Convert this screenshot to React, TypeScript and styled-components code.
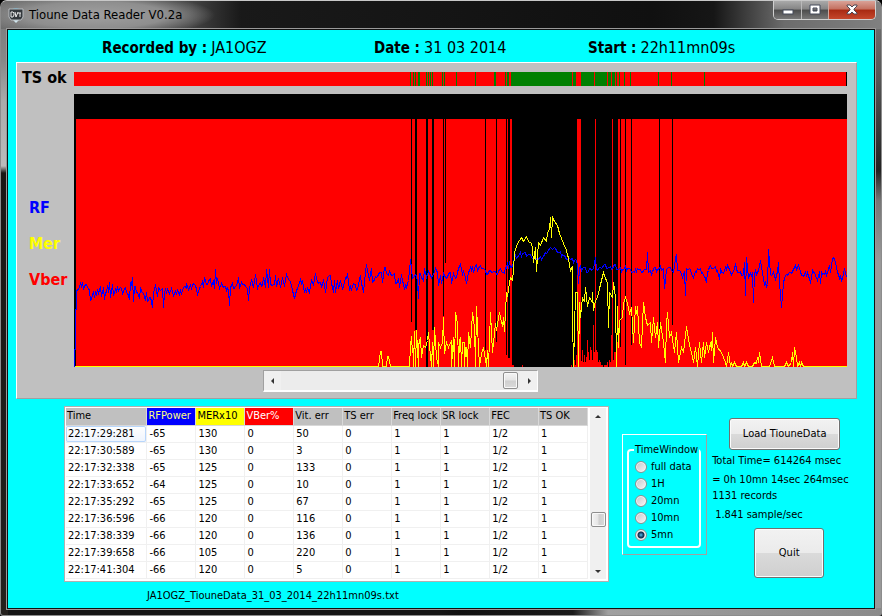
import React, { useState } from "react";
import styled, { createGlobalStyle, css } from "styled-components";

const GlobalStyle = createGlobalStyle`
  *, *::before, *::after { box-sizing: border-box; }
  body {
    margin: 0;
    background: #000;
    color: #000;
    font-family: "DejaVu Sans Condensed", "Noto Sans", sans-serif;
    font-size: 11px;
    line-height: 16px;
  }
  button, input { font: inherit; color: inherit; margin: 0; }
`;

type Point = [number, number];
type Span = [start: number, width: number];
type Bar = [x: number, width: number, top: number, bottom: number];

const LEFT = 74;
const TOP = 94;
const WIDTH = 773;
const HEIGHT = 273;
const BASE = TOP + HEIGHT;

const parse = (s: string): Point[] =>
  s.trim().split(/\s+/).map((p) => p.split(",").map(Number) as Point);

const RF = parse(`
74,366 74,349 75,349 75,309 76,309 76,290 79,287 82,282 83,289 86,284 89,290 90,300 93,291 94,297 97,289 98,293 100,286
101,296 103,287 104,299 107,285 108,292 109,282 110,297 112,284 113,295 117,287 118,290 121,288 122,293 125,287 128,295
129,299 130,282 131,285 132,277 133,301 134,286 137,292 139,298 140,287 143,293 145,300 146,292 147,301 150,297 151,301
152,307 153,293 155,284 157,296 158,287 160,290 162,288 163,307 164,292 167,289 169,293 171,288 173,295 177,290 179,294
183,287 186,288 186,283 188,289 192,285 193,283 196,289 197,294 200,286 202,281 203,287 204,277 206,284 210,278 211,286
213,280 214,288 215,269 216,283 217,278 219,288 221,283 223,287 227,288 228,290 229,305 230,287 232,283 233,288 235,287
237,282 238,277 239,288 241,282 245,286 247,288 248,300 249,288 251,279 253,287 255,274 257,288 259,283 262,285 263,277
265,287 266,269 268,287 269,269 270,283 274,284 275,275 276,286 278,278 280,287 282,277 284,286 286,274 288,279 290,281
292,290 294,298 296,290 299,282 302,280 304,292 307,288 309,292 311,280 313,284 315,273 318,283 322,284 323,279 325,292
327,277 330,275 333,292 334,280 335,292 337,280 338,288 340,280 342,289 344,282 347,273 349,290 353,283 357,289 360,275
363,292 366,264 369,280 371,268 372,282 376,277 379,272 381,272 382,282 384,267 388,275 389,271 391,275 394,273 395,283
398,278 399,287 401,274 404,289 408,280 410,259 412,278 416,275 417,282 418,298 419,273 422,278 423,280 424,268 426,277
428,271 430,275 433,274 435,268 437,272 438,285 440,275 441,283 443,273 445,277 450,272 451,283 453,273 455,278 458,268
460,264 462,274 463,271 466,283 468,272 472,266 473,272 476,264 477,270 480,265 483,268 486,274 490,270 493,271 496,274
500,268 504,273 507,262 508,268 509,261 510,267 513,262 514,257 518,255 522,253 528,254 531,257 534,257 537,259 542,257
546,253 548,250 551,248 555,248 557,252 562,254 565,257 570,259 572,258 573,262 576,260 577,265 578,283 579,268 584,267
587,272 590,268 593,268 595,257 596,269 600,267 603,265 608,267 611,269 614,264 617,269 622,269 627,268 630,269 634,272
637,268 641,272 644,269 646,269 647,252 648,272 652,272 653,268 657,269 659,268 663,268 664,288 666,269 668,267 671,270
673,272 676,254 677,270 680,271 682,277 684,271 685,295 686,268 690,269 693,277 697,268 702,272 706,282 707,272 710,265
713,268 714,267 717,270 719,279 720,268 723,273 727,265 730,272 733,271 735,264 737,272 743,274 744,262 745,295 746,257
748,277 752,272 753,302 754,273 758,270 760,260 762,272 764,284 767,284 768,249 770,274 773,272 775,279 777,271 778,262
779,282 781,307 783,282 786,274 790,272 793,269 798,265 800,271 803,276 807,272 810,283 812,270 815,275 817,280 819,271
820,283 821,272 824,274 827,272 829,265 830,272 832,258 833,257 836,267 839,278 842,278 844,268 846,277`);

const MER = parse(`
74,366 378,366 380,351 381,351 382,366 386,366 387,356 388,356 390,366 409,366 410,345 411,336 412,352 413,353 413,366
414,331 415,366 416,330 418,366 418,345 420,337 421,357 423,345 425,347 427,340 428,332 429,345 431,366 432,342 433,366
434,327 436,357 438,366 438,342 440,347 442,342 443,317 444,353 446,342 448,347 451,340 451,366 453,337 454,366 455,312
457,323 458,366 459,340 460,337 461,366 462,342 464,342 464,366 465,347 466,347 467,366 468,332 470,347 472,312 474,327
475,366 476,306 478,347 479,366 481,353 483,347 486,366 487,350 488,366 490,312 492,352 493,342 495,323 496,330 499,312
502,326 503,317 504,331 506,292 507,296 508,289 510,277 512,280 513,270 514,252 517,243 521,237 523,241 526,236 528,241
531,243 532,248 533,262 535,247 536,271 538,242 540,245 543,237 546,241 547,233 549,228 550,217 551,237 552,217 554,221
557,225 559,233 563,243 566,250 568,258 570,270 572,266 572,317 573,366 575,292 577,292 578,366 579,302 580,317 582,297
583,300 584,301 585,287 587,306 589,297 592,302 592,292 593,310 595,300 597,297 599,288 603,272 607,283 608,327 609,292
612,297 613,282 615,297 616,366 617,306 618,347 619,320 622,317 623,303 625,297 627,303 629,313 631,307 633,342 635,306
636,313 637,306 639,342 641,347 642,323 643,302 645,317 647,325 650,322 651,342 653,317 655,337 657,322 658,347 660,322
663,342 665,362 666,323 667,312 669,337 671,332 674,352 676,332 678,362 681,347 683,352 686,326 689,345 691,352 693,362
695,347 697,366 699,342 701,362 703,342 704,357 706,342 708,352 710,342 711,350 712,332 713,362 715,337 717,347 721,352
725,362 726,366 728,352 730,366 731,362 732,366 734,362 736,366 741,366 743,362 744,366 746,362 748,366 752,366 754,362
756,363 757,357 758,362 759,352 761,366 769,366 772,357 774,366 784,366 786,362 788,366 791,362 792,352 793,366 794,347
796,357 797,366 799,362 800,366 801,362 803,366 846,366`);

/* Stretches with no errors, painted black over the red area. */
const GAPS: Bar[] = [
  [411, 1, 119, 322], [415, 2, 119, 330], [426, 2, 119, 367], [432, 2, 119, 330],
  [443, 1, 119, 316], [445, 1, 119, 263], [485, 1, 119, 350], [496, 1, 119, 342],
  [506, 1, 119, 355], [508, 2, 119, 358], [512, 65, 119, 367],
  [581, 14, 119, 367], [596, 16, 119, 367], [613, 5, 119, 367], [620, 1, 119, 347],
  [625, 1, 119, 365], [631, 1, 119, 345], [659, 1, 119, 340], [672, 1, 119, 325],
];

/* Low error readings inside the clean stretches: x, top. */
const LOW_ERRORS = parse(`
512,365 513,365 522,365 571,365 574,360 575,365 576,355 581,361 582,350 583,362 584,355 585,362 586,357 587,340 588,352
589,360 590,347 591,350 592,360 593,325 594,352 596,350 597,352 598,362 599,360 600,362 601,365 602,365 604,365 605,365
606,365 607,362 609,360 610,362 611,335 613,360 614,352 615,352 616,345 617,342`);

const LOCKED: Span[] = [
  [410, 1], [413, 1], [415, 1], [418, 2], [426, 1], [428, 1], [430, 1], [432, 1], [442, 1], [444, 1],
  [456, 1], [475, 1], [494, 2], [505, 1], [507, 2], [511, 61], [573, 3], [581, 13], [595, 12],
  [608, 3], [612, 3], [616, 1], [619, 1], [624, 1], [630, 1], [658, 1], [671, 1], [704, 1],
];

/* Fills the samples between recorded turning points with a small repeatable flutter. */
const flutter = (points: Point[]): Point[] => {
  const out: Point[] = [];
  points.forEach(([x, y], i) => {
    out.push([x, y]);
    const next = points[i + 1];
    if (!next || next[0] - x < 3 || next[0] <= 77) return;
    for (let k = x + 1; k < next[0]; k += 1) {
      const t = (k - x) / (next[0] - x);
      const offset = ((k * 7919) % 5) - 2;
      out.push([k, Math.round(y + (next[1] - y) * t) + offset]);
    }
  });
  return out;
};

const toPath = (points: Point[]) => points.map((p) => p.join(",")).join(" ");

const RF_PATH = toPath(flutter(RF));
const MER_PATH = toPath(MER);

const Frame = styled.main`
  display: flex;
  flex-direction: column;
  min-height: 100vh;
  padding: 0 6px 6px 6px;
  border: 1px solid #8c8c8c;
  border-top-color: #c8c8c8;
  border-radius: 7px 7px 3px 3px;
  background:
    linear-gradient(90deg, transparent 50%, #101010 52%, #1a1a1a 65%, #a0a0a0 69%, #8a8a8a 100%) bottom / 100% 7px no-repeat,
    linear-gradient(180deg, #777 0, #888 60px, #aaa 100px, #bbb 165px, #1a1614 172px, #24201d 100%) left / 7px 100% no-repeat,
    linear-gradient(180deg, #777 0, #555 80px, #222 170px, #777 200px, #999 260px, #999 100%) right / 7px 100% no-repeat,
    #151515;
`;

const TitleBar = styled.header`
  display: flex;
  align-items: flex-start;
  height: 28px;
  margin: 0 -6px;
  padding-left: 7px;
  border-radius: 6px 6px 0 0;
  background:
    radial-gradient(ellipse 120px 22px at 94px 14px, #a0a0a0 0, #8e8e8e 60%, transparent 100%),
    linear-gradient(90deg, #6c6c6c 0, #444 190px, #191919 240px, #101010 650px, #161616 81%, #6c6c6c 89%, #808080 100%);
`;

const Title = styled.h1`
  flex: 1;
  margin: 0;
  padding: 6px 0 0 5px;
  font-size: 13px;
  font-weight: 400;
  line-height: 16px;
`;

const AppIcon = styled.svg`
  width: 16px;
  height: 16px;
  margin-top: 6px;
`;

const WindowButtons = styled.div`
  display: flex;
  height: 19px;
  margin-right: 5px;
  border: 1px solid #d0d0d0;
  border-top: 0;
  border-radius: 0 0 5px 5px;
  overflow: hidden;
`;

const WindowButton = styled.button<{ $close?: boolean }>`
  display: flex;
  align-items: center;
  justify-content: center;
  width: ${(p) => (p.$close ? 47 : 27)}px;
  padding: 0;
  border: 0;
  border-left: 1px solid ${(p) => (p.$close ? "#cfa9a0" : "#b9b9b9")};
  background: ${(p) =>
    p.$close
      ? "linear-gradient(180deg, #d9a297 0, #c4705f 45%, #a82a12 50%, #c5482c 100%)"
      : "linear-gradient(180deg, #a9a9a9 0, #858585 45%, #4c4c4c 50%, #777 100%)"};
  &:first-child { border-left: 0; }
`;

const Client = styled.section`
  flex: 1;
  padding: 0 17px 4px 8px;
  border: 1px solid #111;
  outline: 1px solid #999;
  outline-offset: 0;
  background: #0ff;
`;

const Heading = styled.dl`
  display: grid;
  grid-template-columns: 272fr 214fr 269fr;
  height: 32px;
  margin: 0;
  padding: 8px 0 0 86px;
  font-size: 15px;
  line-height: 20px;
`;

const HeadingItem = styled.div`
  display: flex;
  gap: 4px;
  white-space: nowrap;
  dt { font-weight: 700; }
  dd { margin: 0; font-size: 16px; }
`;

const bevel = css`
  border: 1px solid #a0a0a0;
  border-top-color: #fff;
  border-left-color: #fff;
`;

const ChartPanel = styled.section`
  ${bevel}
  display: grid;
  grid-template-columns: 57px 1fr;
  padding: 9px 9px 6px 0;
  row-gap: 8px;
  background: #c0c0c0;
`;

const StripLabel = styled.h2`
  margin: 0;
  padding-left: 5px;
  font-size: 16px;
  line-height: 12px;
  white-space: nowrap;
`;

const Strip = styled.svg`
  display: block;
  width: 100%;
  height: 14px;
`;

const Plot = styled.svg`
  display: block;
  width: 100%;
  height: 273px;
`;

const Legend = styled.ul`
  margin: 0;
  padding: 96px 0 0 12px;
  list-style: none;
  font-size: 16px;
  font-weight: 700;
`;

const LegendItem = styled.li<{ $color: string }>`
  line-height: 36px;
  color: ${(p) => p.$color};
`;

const HScroll = styled.div`
  grid-column: 1 / -1;
  display: flex;
  width: 275px;
  height: 22px;
  margin: -5px 0 0 246px;
  border: 1px solid #a0a0a0;
  border-right-color: #fff;
  border-bottom-color: #fff;
  border-width: 1px 1px 2px 1px;
  background: #ececec;
`;

const ScrollButton = styled.button`
  display: flex;
  align-items: center;
  justify-content: center;
  flex: 0 0 17px;
  padding: 0;
  border: 0;
  background: #f0f0f0;
`;

const Track = styled.input<{ $vertical?: boolean }>`
  appearance: none;
  flex: 1;
  min-width: 0;
  min-height: 0;
  background: transparent;
  ${(p) => p.$vertical && "writing-mode: vertical-lr; width: 16px;"}
  &::-webkit-slider-thumb {
    appearance: none;
    width: 15px;
    height: ${(p) => (p.$vertical ? 15 : 17)}px;
    border: 1px solid #8e8e8e;
    border-radius: 2px;
    box-shadow: inset 0 0 0 1px #f8f8f8;
    background: linear-gradient(${(p) => (p.$vertical ? "90deg" : "180deg")}, #f4f4f4 0, #e4e4e4 48%, #cfcfcf 52%, #dadada 100%);
  }
`;

const Lower = styled.div`
  display: flex;
  align-items: flex-start;
  padding: 7px 0 0 48px;
`;

const RecordColumn = styled.div`
  flex: 0 1 545px;
`;

const GridBox = styled.div`
  display: flex;
  justify-content: space-between;
  padding: 1px 2px 2px 1px;
  border: 1px solid #b0b0b0;
  background: #fff;
`;

const Records = styled.table`
  flex: 0 1 522px;
  height: 171px;
  border-collapse: collapse;
  table-layout: fixed;
  line-height: 16px;
  white-space: nowrap;
`;

const HeadCell = styled.th<{ $bg?: string; $fg?: string; $wide?: boolean }>`
  width: ${(p) => (p.$wide ? 81 : 49)}px;
  height: 17px;
  padding: 0 0 0 1px;
  border-right: 1px solid #d8d8d8;
  border-bottom: 1px solid #d8d8d8;
  background: ${(p) => p.$bg ?? "#c0c0c0"};
  color: ${(p) => p.$fg ?? "#000"};
  font-weight: 400;
  text-align: left;
`;

const Cell = styled.td<{ $focused?: boolean }>`
  height: 17px;
  padding: 0 0 0 2px;
  border-right: 1px solid #f0f0f0;
  border-bottom: 1px solid #f0f0f0;
  ${(p) =>
    p.$focused &&
    "border-radius: 2px; background: linear-gradient(#fff, #eef4fd); box-shadow: inset 0 0 0 1px #b8d6fb;"}
`;

const VScroll = styled.div`
  display: flex;
  flex-direction: column;
  width: 16px;
  background: #f0f0f0;
`;

const FileName = styled.p`
  margin: 6px 0 0 83px;
`;

const WindowPanel = styled.div`
  ${bevel}
  flex: 0 0 84px;
  height: 121px;
  margin: 28px 0 0 13px;
  padding: 7px 5px 0 4px;
`;

const Choices = styled.fieldset`
  min-width: 0;
  height: 106px;
  margin: 0;
  padding: 0 0 0 6px;
  border: 2px solid #fff;
  border-radius: 4px;
  legend { padding: 0 1px; margin-left: -1px; white-space: nowrap; }
`;

const Choice = styled.label`
  display: flex;
  align-items: center;
  gap: 4px;
  height: 17px;
  white-space: nowrap;
`;

const Radio = styled.input`
  appearance: none;
  width: 12px;
  height: 12px;
  border: 1px solid #8e8f8f;
  border-radius: 50%;
  box-shadow: inset 0 0 0 1px #f4f4f4;
  background: linear-gradient(135deg, #c4c7cb, #f6f6f6);
  &:checked {
    background: radial-gradient(circle at 5px 5px, #5cc0ea 0, #1a4d78 2px, #102c48 3px, #dfe6ea 4px);
  }
`;

const Side = styled.div`
  display: flex;
  flex-direction: column;
  align-items: flex-start;
  margin: 12px 0 0 5px;
  white-space: nowrap;
`;

const PushButton = styled.button<{ $tall?: boolean }>`
  width: ${(p) => (p.$tall ? 70 : 111)}px;
  height: ${(p) => (p.$tall ? 50 : 32)}px;
  margin-left: ${(p) => (p.$tall ? 42 : 17)}px;
  padding: 0;
  border: 1px solid #707070;
  border-radius: 3px;
  box-shadow: inset 0 0 0 1px #fbfbfb;
  background: linear-gradient(180deg, #f2f2f2 0, #ebebeb 49%, #dadada 51%, #cfcfcf 100%);
`;

const Stats = styled.ul`
  display: flex;
  flex-direction: column;
  margin: 3px 0 5px;
  padding: 0;
  list-style: none;
`;

const Stat = styled.li<{ $gap?: boolean; $inset?: boolean }>`
  margin-top: ${(p) => (p.$gap ? 3 : 0)}px;
  padding-left: ${(p) => (p.$inset ? 3 : 0)}px;
`;

const COLUMNS: { name: string; bg?: string; fg?: string }[] = [
  { name: "Time" },
  { name: "RFPower", bg: "#0000ff", fg: "#ffff80" },
  { name: "MERx10", bg: "#ffff00" },
  { name: "VBer%", bg: "#ff0000", fg: "#ffffff" },
  { name: "Vit. err" },
  { name: "TS err" },
  { name: "Freq lock" },
  { name: "SR lock" },
  { name: "FEC" },
  { name: "TS OK" },
];

const ROWS: [string, number, number, number][] = [
  ["22:17:29:281", -65, 130, 50],
  ["22:17:30:589", -65, 130, 3],
  ["22:17:32:338", -65, 125, 133],
  ["22:17:33:652", -64, 125, 10],
  ["22:17:35:292", -65, 125, 67],
  ["22:17:36:596", -66, 120, 116],
  ["22:17:38:339", -66, 120, 136],
  ["22:17:39:658", -66, 105, 220],
  ["22:17:41:304", -66, 120, 5],
];

const ARROWS = {
  left: "M5 1 L2 4 L5 7 Z",
  right: "M3 1 L6 4 L3 7 Z",
  up: "M1 5 L4 2 L7 5 Z",
  down: "M1 3 L4 6 L7 3 Z",
};

const Arrow = ({ to }: { to: keyof typeof ARROWS }) => (
  <svg width="8" height="8" viewBox="0 0 8 8" aria-hidden="true">
    <path d={ARROWS[to]} fill="#333" />
  </svg>
);

const WINDOWS = ["full data", "1H", "20mn", "10mn", "5mn"];

export default function App() {
  const [span, setSpan] = useState("5mn");
  return (
    <>
      <GlobalStyle />
      <Frame>
        <TitleBar>
          <AppIcon viewBox="0 0 16 16" aria-hidden="true">
            <path d="M3 3 Q8 -1 13 3 Z" fill="#5aa8c4" />
            <path d="M5 13 H11 L8 16 Z" fill="#cfe6ee" />
            <path d="M1 2 H15 V10 L13 13 H3 L1 10 Z" fill="#33383c" stroke="#b8bcc0" />
            <path d="M3 5 V10 H5 L6 8 V6 L5 5 Z M7 5 L8 10 L10 5 M10 6 H13 M12 6 V10" fill="none" stroke="#eee" />
          </AppIcon>
          <Title>Tioune Data Reader V0.2a</Title>
          <WindowButtons>
            <WindowButton aria-label="Minimize">
              <svg width="12" height="12" viewBox="0 0 12 12">
                <rect x="1" y="6" width="10" height="4" fill="#fff" stroke="#444a5a" />
              </svg>
            </WindowButton>
            <WindowButton aria-label="Maximize">
              <svg width="12" height="12" viewBox="0 0 12 12">
                <path d="M1 1 H11 V10 H1 Z M4 4 V7 H8 V4 Z" fill="#fff" fillRule="evenodd" stroke="#444a5a" />
              </svg>
            </WindowButton>
            <WindowButton $close aria-label="Close">
              <svg width="12" height="12" viewBox="0 0 12 12">
                <path d="M1 1 H4 L6 3 L8 1 H11 V2 L8 5 V6 L11 9 V10 H8 L6 8 L4 10 H1 V9 L4 6 V5 L1 2 Z" fill="#fff" stroke="#4d4652" />
              </svg>
            </WindowButton>
          </WindowButtons>
        </TitleBar>
        <Client>
          <Heading>
            <HeadingItem><dt>Recorded by :</dt><dd>JA1OGZ</dd></HeadingItem>
            <HeadingItem><dt>Date :</dt><dd>31 03 2014</dd></HeadingItem>
            <HeadingItem><dt>Start :</dt><dd>22h11mn09s</dd></HeadingItem>
          </Heading>

          <ChartPanel>
            <StripLabel>TS ok</StripLabel>
            <Strip viewBox={`${LEFT} 0 ${WIDTH} 14`} preserveAspectRatio="none" shapeRendering="crispEdges" role="img" aria-label="TS ok">
              <rect x={LEFT} width={WIDTH} height="14" fill="#f00" />
              {LOCKED.map(([x, w]) => (
                <rect key={x} x={x} width={w} height="14" fill="#008000" />
              ))}
              <rect x={LEFT + WIDTH - 1} width="1" height="14" fill="#000" />
            </Strip>
            <Legend>
              <LegendItem $color="#00f">RF</LegendItem>
              <LegendItem $color="#ff0">Mer</LegendItem>
              <LegendItem $color="#f00">Vber</LegendItem>
            </Legend>
            <Plot viewBox={`${LEFT} ${TOP} ${WIDTH} ${HEIGHT}`} preserveAspectRatio="none" shapeRendering="crispEdges" role="img" aria-label="RF, Mer and Vber over time">
              <rect x={LEFT} y={TOP} width={WIDTH} height={HEIGHT} fill="#000" />
              <rect x={LEFT + 2} y="119" width={WIDTH - 2} height={BASE - 119} fill="#f00" />
              {GAPS.map(([x, w, top, bottom]) => (
                <rect key={x} x={x} y={top} width={w} height={bottom - top} fill="#000" />
              ))}
              {LOW_ERRORS.map(([x, y]) => (
                <rect key={x} x={x} y={y} width="1" height={BASE - y} fill="#f00" />
              ))}
              <g transform="translate(0.5 0.5)" fill="none" strokeWidth="1">
                <polyline points={RF_PATH} stroke="#00f" />
                <polyline points={MER_PATH} stroke="#ff0" />
              </g>
            </Plot>
            <HScroll>
              <ScrollButton aria-label="Scroll left"><Arrow to="left" /></ScrollButton>
              <Track type="range" min="0" max="100" defaultValue="99" aria-label="Time position" />
              <ScrollButton aria-label="Scroll right"><Arrow to="right" /></ScrollButton>
            </HScroll>
          </ChartPanel>

          <Lower>
            <RecordColumn>
              <GridBox>
                <Records>
                  <thead>
                    <tr>
                      {COLUMNS.map((c, i) => (
                        <HeadCell key={c.name} $bg={c.bg} $fg={c.fg} $wide={i === 0}>{c.name}</HeadCell>
                      ))}
                    </tr>
                  </thead>
                  <tbody>
                    {ROWS.map(([time, rf, mer, vit], i) => (
                      <tr key={time}>
                        <Cell $focused={i === 0}>{time}</Cell>
                        {[rf, mer, 0, vit, 0, 1, 1, "1/2", 1].map((v, k) => (
                          <Cell key={k}>{v}</Cell>
                        ))}
                      </tr>
                    ))}
                  </tbody>
                </Records>
                <VScroll>
                  <ScrollButton aria-label="Scroll up"><Arrow to="up" /></ScrollButton>
                  <Track $vertical type="range" min="0" max="100" defaultValue="71" aria-label="Record position" />
                  <ScrollButton aria-label="Scroll down"><Arrow to="down" /></ScrollButton>
                </VScroll>
              </GridBox>
              <FileName>JA1OGZ_TiouneData_31_03_2014_22h11mn09s.txt</FileName>
            </RecordColumn>

            <WindowPanel>
              <Choices>
                <legend>TimeWindow</legend>
                {WINDOWS.map((w) => (
                  <Choice key={w}>
                    <Radio type="radio" name="window" checked={span === w} onChange={() => setSpan(w)} />
                    {w}
                  </Choice>
                ))}
              </Choices>
            </WindowPanel>

            <Side>
              <PushButton>Load TiouneData</PushButton>
              <Stats>
                <Stat>Total Time= 614264 msec</Stat>
                <Stat $gap>= 0h 10mn 14sec 264msec</Stat>
                <Stat>1131 records</Stat>
                <Stat $gap $inset>1.841 sample/sec</Stat>
              </Stats>
              <PushButton $tall>Quit</PushButton>
            </Side>
          </Lower>
        </Client>
      </Frame>
    </>
  );
}
